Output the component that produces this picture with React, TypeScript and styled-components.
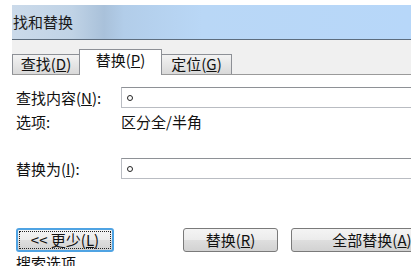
import React from "react";
import styled, { createGlobalStyle } from "styled-components";

const Global = createGlobalStyle`
  html, body { margin: 0; padding: 0; background: #ffffff; }
  body { font-family: "Noto Sans CJK SC", "Noto Sans", sans-serif; color: #111; }
`;

const Dialog = styled.div`
  margin: 5px 0 0 12px;
  width: 399px;
  height: 261px;
  overflow: hidden;
  background: #ffffff;
  display: flex;
  flex-direction: column;
`;

const TitleBar = styled.div`
  height: 34px;
  flex: none;
  border-bottom: 1px solid #5d6d7e;
  background: linear-gradient(
    90deg,
    #cbdaea 0px,
    #c0d3e6 60px,
    #a9c1da 92px,
    #b2cde9 112px,
    #b9d7f6 190px,
    #b7d7f9 100%
  );
  font-size: 15px;
  line-height: 34px;
  padding-left: 1px;
  color: #1a1a1a;
  white-space: nowrap;
`;

const TabStrip = styled.div`
  height: 34px;
  flex: none;
  background: #f0f0f0;
  border-bottom: 1px solid #9a9a9a;
  display: flex;
  align-items: flex-end;
`;

const Tab = styled.div<{ $active?: boolean; $w: number }>`
  width: ${(p) => p.$w}px;
  height: ${(p) => (p.$active ? 26 : 20)}px;
  box-sizing: border-box;
  margin-bottom: ${(p) => (p.$active ? -1 : 0)}px;
  margin-left: ${(p) => (p.$active ? -1 : 0)}px;
  margin-right: ${(p) => (p.$active ? -1 : 0)}px;
  position: relative;
  z-index: ${(p) => (p.$active ? 1 : 0)};
  border: 1px solid #8d9096;
  border-bottom: none;
  background: ${(p) =>
    p.$active ? "#ffffff" : "linear-gradient(#f3f3f3, #e6e6e6 50%, #d9d9d9)"};
  font-size: 15px;
  line-height: ${(p) => (p.$active ? 20 : 17)}px;
  text-align: center;
  white-space: nowrap;
  color: #111;
`;

const Content = styled.div`
  flex: 1;
  padding: 12px 0 0 4px;
  display: flex;
  flex-direction: column;
`;

const FieldRow = styled.div<{ $mt?: number }>`
  display: grid;
  grid-template-columns: 105px 330px;
  align-items: center;
  margin-top: ${(p) => p.$mt ?? 0}px;
  font-size: 15px;
  white-space: nowrap;
`;

const Label = styled.span`
  line-height: 16px;
`;

const Input = styled.div`
  height: 21px;
  box-sizing: border-box;
  border: 1px solid #b9bcc2;
  border-top-color: #8e9196;
  background: #fff;
  display: flex;
  align-items: center;
  padding-left: 5px;
`;

const Circle = styled.span`
  width: 4px;
  height: 4px;
  border: 1px solid #222;
  border-radius: 50%;
`;

const Value = styled.span`
  line-height: 16px;
`;

const ButtonRow = styled.div`
  display: flex;
  margin-top: 49px;
  white-space: nowrap;
`;

const Button = styled.div<{ $w: number; $ml?: number; $focus?: boolean }>`
  flex: none;
  width: ${(p) => p.$w}px;
  height: 24px;
  margin-left: ${(p) => p.$ml ?? 0}px;
  box-sizing: border-box;
  border: ${(p) => (p.$focus ? "2px solid #4fa3e3" : "1px solid #7a7a7a")};
  border-radius: 3px;
  background: linear-gradient(#f4f4f4 0%, #ececec 48%, #dedede 52%, #d2d2d2 100%);
  font-size: 15px;
  line-height: ${(p) => (p.$focus ? 20 : 22)}px;
  text-align: center;
  position: relative;
  color: #111;
  &::after {
    content: "";
    display: ${(p) => (p.$focus ? "block" : "none")};
    position: absolute;
    inset: 1px;
    border: 1px dotted #222;
    pointer-events: none;
  }
`;

const Heading = styled.div`
  margin-top: 2px;
  font-size: 15px;
  line-height: 18px;
  white-space: nowrap;
`;

const Key = styled.u`
  text-underline-offset: 1px;
`;

export default function App() {
  return (
    <>
      <Global />
      <Dialog>
        <TitleBar>找和替换</TitleBar>
        <TabStrip>
          <Tab $w={68}>
            查找(<Key>D</Key>)
          </Tab>
          <Tab $w={83} $active>
            替换(<Key>P</Key>)
          </Tab>
          <Tab $w={71}>
            定位(<Key>G</Key>)
          </Tab>
        </TabStrip>
        <Content>
          <FieldRow>
            <Label>
              查找内容(<Key>N</Key>):
            </Label>
            <Input>
              <Circle />
            </Input>
          </FieldRow>
          <FieldRow $mt={6}>
            <Label>选项:</Label>
            <Value>区分全/半角</Value>
          </FieldRow>
          <FieldRow $mt={28}>
            <Label>
              替换为(<Key>I</Key>):
            </Label>
            <Input>
              <Circle />
            </Input>
          </FieldRow>
          <ButtonRow>
            <Button $w={98} $focus>
              {"<< 更少("}
              <Key>L</Key>)
            </Button>
            <Button $w={95} $ml={69}>
              替换(<Key>R</Key>)
            </Button>
            <Button $w={162} $ml={13}>
              全部替换(<Key>A</Key>)
            </Button>
          </ButtonRow>
          <Heading>搜索选项</Heading>
        </Content>
      </Dialog>
    </>
  );
}
